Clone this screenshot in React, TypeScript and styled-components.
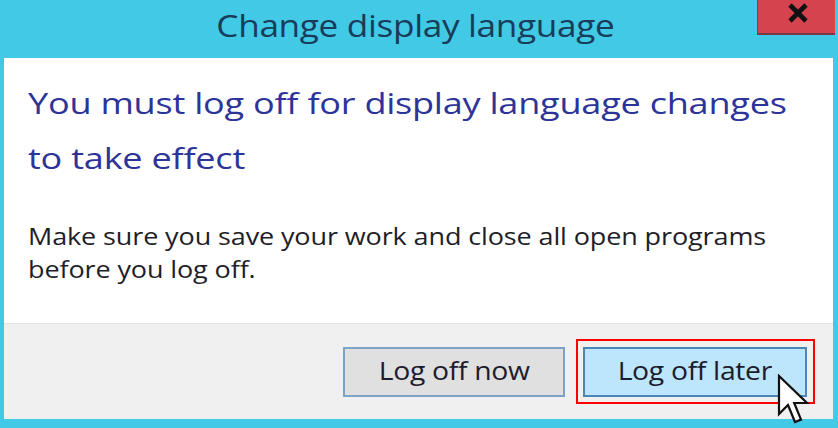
import React from "react";
import styled, { createGlobalStyle } from "styled-components";

const Global = createGlobalStyle`
  html, body { margin: 0; padding: 0; background: #41c9e6; }
  #root { width: 838px; height: 428px; }
  * { box-sizing: border-box; }
`;

const Window = styled.div`
  width: 838px;
  height: 428px;
  background: #41c9e6;
  display: flex;
  flex-direction: column;
  padding: 0 5px 9px 4px;
  font-family: "Open Sans", "Noto Sans", sans-serif;
  position: relative;
  overflow: hidden;
`;

const TitleBar = styled.div`
  height: 58px;
  display: grid;
  grid-template-columns: 1fr auto 1fr;
  margin-right: -5px;
`;

const Stretch = styled.span<{ $sx: number; $origin?: string }>`
  display: inline-block;
  white-space: nowrap;
  transform: scaleX(${(p) => p.$sx});
  transform-origin: ${(p) => p.$origin ?? "left"} center;
`;

const Title = styled.div`
  grid-column: 2;
  align-self: center;
  font-size: 31px;
  color: #183d5a;
  letter-spacing: -0.3px;
  margin-top: -8px;
  margin-right: 12px;
`;

const CloseButton = styled.div`
  grid-column: 3;
  justify-self: end;
  align-self: start;
  width: 78px;
  height: 35px;
  margin-right: 3px;
  background: #d5434f;
  border-left: 1px solid #8f3a40;
  border-bottom: 2px solid #7a3a40;
  display: flex;
  align-items: flex-start;
  justify-content: center;
  padding: 3px 0 0 3px;
`;

const CloseIcon = styled.svg`
  width: 22px;
  height: 20px;
  display: block;
`;

const Content = styled.div`
  flex: 1;
  background: #ffffff;
  padding: 18px 24px 0 24px;
  display: flex;
  flex-direction: column;
`;

const Heading = styled.div`
  font-size: 28.5px;
  line-height: 55px;
  color: #2d3499;
  letter-spacing: -0.2px;
`;

const Body = styled.div`
  margin-top: 34px;
  font-size: 23px;
  line-height: 33px;
  color: #1e1e28;
  letter-spacing: -0.1px;
`;

const Footer = styled.div`
  height: 96px;
  background: #f0f0f0;
  border-top: 1px solid #e4e4e4;
  display: flex;
  justify-content: flex-end;
  align-items: center;
  gap: 18px;
  padding: 0 26px 0 0;
`;

const Button = styled.div<{ $primary?: boolean }>`
  width: ${(p) => (p.$primary ? 224 : 222)}px;
  height: 50px;
  display: flex;
  align-items: center;
  justify-content: center;
  font-size: 26px;
  color: #1c1c2c;
  letter-spacing: -0.3px;
  background: ${(p) => (p.$primary ? "#bde5fb" : "#e0e0e0")};
  border: 2px solid ${(p) => (p.$primary ? "#4a86b6" : "#7aa3c8")};
  position: relative;
  padding-bottom: 3px;
`;

const Focus = styled.div`
  position: absolute;
  left: -9px;
  right: -10px;
  top: -10px;
  bottom: -9px;
  border: 2px solid #ff0000;
  pointer-events: none;
`;

const Cursor = styled.svg`
  position: absolute;
  left: 777px;
  top: 374px;
  width: 34px;
  height: 54px;
`;

export default function App() {
  return (
    <>
      <Global />
      <Window>
        <TitleBar>
          <Title>
            <Stretch $sx={1.135} $origin="center">
              Change display language
            </Stretch>
          </Title>
          <CloseButton>
            <CloseIcon viewBox="0 0 22 20">
              <path
                d="M3 2 L19 18 M19 2 L3 18"
                stroke="#111111"
                strokeWidth="4.6"
                strokeLinecap="butt"
                fill="none"
              />
            </CloseIcon>
          </CloseButton>
        </TitleBar>
        <Content>
          <Heading>
            <Stretch $sx={1.267}>You must log off for display language changes</Stretch>
            <br />
            <Stretch $sx={1.267}>to take effect</Stretch>
          </Heading>
          <Body>
            <Stretch $sx={1.174}>Make sure you save your work and close all open programs</Stretch>
            <br />
            <Stretch $sx={1.174}>before you log off.</Stretch>
          </Body>
        </Content>
        <Footer>
          <Button>
            <Stretch $sx={1.09} $origin="center">Log off now</Stretch>
          </Button>
          <Button $primary>
            <Stretch $sx={1.09} $origin="center">Log off later</Stretch>
            <Focus />
          </Button>
        </Footer>
        <Cursor viewBox="0 0 17 27">
          <path
            d="M1 1 L1 20 L5.5 15.5 L9 24 L12 22.8 L8.6 14.5 L15 14.5 Z"
            fill="#ffffff"
            stroke="#111111"
            strokeWidth="1.1"
            strokeLinejoin="miter"
          />
        </Cursor>
      </Window>
    </>
  );
}
